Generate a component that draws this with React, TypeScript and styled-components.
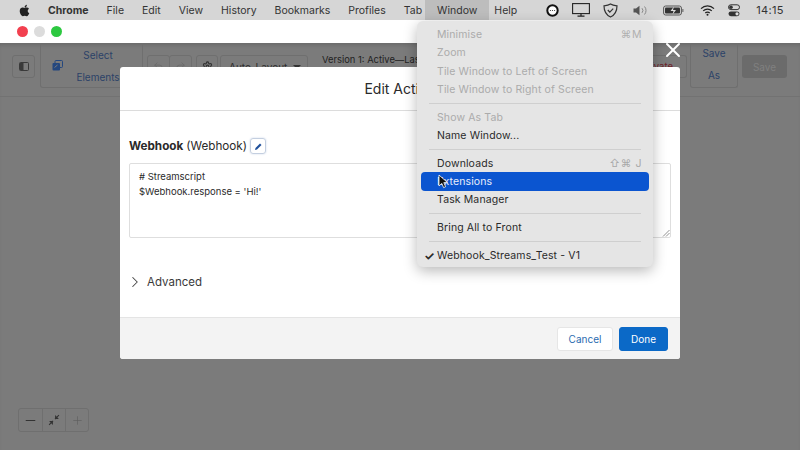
import React from 'react';
import styled, { createGlobalStyle } from 'styled-components';
import { FaApple } from 'react-icons/fa';
import { ChevronRight, Minus, Plus, Redo2, Settings, Undo2, X } from 'lucide-react';

const GlobalStyle = createGlobalStyle`
  html, body {
    margin: 0;
    padding: 0;
    background: #7b7b7b;
  }
  * {
    box-sizing: border-box;
  }
`;

const Screen = styled.div`
  position: relative;
  width: 800px;
  height: 450px;
  overflow: hidden;
  display: flex;
  flex-direction: column;
  font-family: Inter, 'Liberation Sans', sans-serif;
`;

const MenuBar = styled.div`
  height: 20px;
  background: #d6d6d6;
  display: flex;
  align-items: center;
  padding-left: 18px;
  font-size: 10.5px;
  color: #333;
`;

const AppleMark = styled.span`
  display: flex;
  width: 13px;
  margin-right: 8px;
  flex: none;
`;

const MenuItem = styled.div<{ $bold?: boolean; $open?: boolean }>`
  height: 20px;
  display: flex;
  align-items: center;
  flex: none;
  padding: 0 ${p => (p.$open ? '12px' : '9px')};
  margin: ${p => (p.$open ? '0 -4px 0 -6px' : '0')};
  font-weight: ${p => (p.$bold ? 700 : 400)};
  background: ${p => (p.$open ? '#bdbdbd' : 'transparent')};
`;

const StatusArea = styled.div`
  margin-left: 20px;
  display: flex;
  align-items: center;
  height: 20px;
  flex: none;
`;

const StatusIcon = styled.svg<{ $gap: number }>`
  margin-right: ${p => p.$gap}px;
  flex: none;
`;

const Clock = styled.span`
  font-size: 11px;
  letter-spacing: 0.3px;
  color: #333;
`;

const TitleBar = styled.div`
  height: 23px;
  background: #fff;
  display: flex;
  align-items: center;
  padding-left: 17px;
  gap: 6px;
`;

const Light = styled.span<{ $color: string }>`
  width: 11px;
  height: 11px;
  border-radius: 50%;
  background: ${p => p.$color};
`;

const Workspace = styled.div`
  flex: 1;
  background: #7b7b7b;
  box-shadow: inset 0 4px 4px -2px rgba(0, 0, 0, 0.14);
`;

const Toolbar = styled.div`
  height: 54px;
  border-bottom: 1px solid #727272;
  display: flex;
  align-items: flex-start;
  padding-left: 12px;
`;

const ToolButton = styled.div<{ $width: number; $left: number }>`
  width: ${p => p.$width}px;
  height: 23px;
  margin: 12px 0 0 ${p => p.$left}px;
  border: 1px solid #6f6f6f;
  border-radius: 3px;
  display: flex;
  align-items: center;
  justify-content: center;
  color: #4c4c4c;
  flex: none;
`;

const SelectGroup = styled.div`
  width: 103px;
  height: 45px;
  margin-left: 5px;
  border: 1px solid #6f6f6f;
  border-top: 0;
  border-radius: 0 0 3px 3px;
  display: flex;
  align-items: center;
  padding: 0 9px 0 11px;
  flex: none;
`;

const StackedLabel = styled.div`
  flex: 1;
  display: flex;
  flex-direction: column;
  align-items: center;
  gap: 5px;
  padding-top: 2px;
  font-size: 10px;
  line-height: 17px;
  color: #2c4268;
`;

const AutoLayout = styled.div`
  width: 88px;
  height: 23px;
  margin: 12px 0 0 2px;
  border: 1px solid #6f6f6f;
  border-radius: 3px;
  display: flex;
  align-items: center;
  justify-content: space-between;
  padding: 0 6px 0 8px;
  font-size: 10px;
  color: #2e2e2e;
  flex: none;
`;

const Caret = styled.span`
  border-left: 4px solid transparent;
  border-right: 4px solid transparent;
  border-top: 4px solid #333;
`;

const VersionText = styled.div`
  margin: 10px 0 0 14px;
  font-size: 9.4px;
  line-height: 14px;
  color: #222;
  white-space: nowrap;
  flex: none;
`;

const SaveAs = styled.div`
  position: absolute;
  top: 43px;
  left: 690px;
  width: 48px;
  height: 45px;
  border: 1px solid #6f6f6f;
  border-top: 0;
  border-radius: 0 0 3px 3px;
  display: flex;
`;

const SaveButton = styled.div`
  position: absolute;
  top: 55px;
  left: 742px;
  width: 45px;
  height: 23px;
  border-radius: 3px;
  background: #6b6b6b;
  color: #808080;
  font-size: 10px;
  display: flex;
  align-items: center;
  justify-content: center;
`;

const ActivateBox = styled.div`
  position: absolute;
  top: 55px;
  left: 646px;
  width: 41px;
  height: 23px;
  border: 1px solid #6f6f6f;
  border-left: 0;
  border-radius: 0 3px 3px 0;
  font-size: 9.5px;
  color: #6e1f2a;
  line-height: 14px;
  padding: 4px 13px 0 0;
  display: flex;
  justify-content: flex-end;
  white-space: nowrap;
`;

const ZoomControls = styled.div`
  position: absolute;
  left: 18px;
  top: 408px;
  width: 71px;
  height: 24px;
  border: 1px solid #6f6f6f;
  border-radius: 3px;
  display: grid;
  grid-template-columns: repeat(3, 1fr);
`;

const ZoomCell = styled.div<{ $divider?: boolean; $color?: string }>`
  display: flex;
  align-items: center;
  justify-content: center;
  color: ${p => p.$color ?? '#333'};
  border-left: ${p => (p.$divider ? '1px solid #6f6f6f' : '0')};
`;

const CloseButton = styled.div`
  position: absolute;
  top: 38px;
  left: 661px;
  color: #fff;
  display: flex;
`;

const Modal = styled.div`
  position: absolute;
  left: 120px;
  top: 67px;
  width: 560px;
  height: 292px;
  background: #fff;
  border-radius: 3px;
  display: flex;
  flex-direction: column;
`;

const ModalHeader = styled.div`
  height: 44px;
  border-bottom: 1px solid #dcdcdc;
  display: flex;
  align-items: center;
  justify-content: center;
  font-size: 14px;
  color: #2a2a2a;
  padding-bottom: 1px;
`;

const ModalBody = styled.div`
  flex: 1;
  padding: 26px 9px 0;
`;

const ResourceTitle = styled.div`
  display: flex;
  align-items: center;
  font-size: 11.7px;
  color: #2a2a2a;
  height: 18px;
`;

const Strong = styled.strong`
  font-weight: 700;
  margin-right: 3px;
`;

const PencilButton = styled.span`
  width: 16px;
  height: 16px;
  margin-left: 3px;
  border: 1px solid #c4cfe0;
  border-radius: 3px;
  display: flex;
  align-items: center;
  justify-content: center;
  box-shadow: 0 0 2px #c8d4e8;
`;

const ScriptBox = styled.div`
  position: relative;
  margin-top: 8px;
  height: 75px;
  border: 1px solid #dedede;
  border-radius: 2px;
  padding: 5px 9px;
  font-size: 9.5px;
  line-height: 15px;
  color: #2b2b2b;
`;

const ResizeGrip = styled.svg`
  position: absolute;
  right: 0;
  bottom: 0;
`;

const AdvancedRow = styled.div`
  margin: 35px 0 0 -3px;
  display: flex;
  align-items: center;
  gap: 3px;
  font-size: 11.5px;
  color: #3a3a3a;
`;

const ModalFooter = styled.div`
  height: 42px;
  background: #f3f3f3;
  border-top: 1px solid #e4e4e4;
  border-radius: 0 0 3px 3px;
  display: flex;
  align-items: center;
  justify-content: flex-end;
  gap: 6px;
  padding: 0 12px;
`;

const FooterButton = styled.div<{ $primary?: boolean }>`
  width: ${p => (p.$primary ? 49 : 56)}px;
  height: 24px;
  border-radius: 3px;
  display: flex;
  align-items: center;
  justify-content: center;
  font-size: 10px;
  background: ${p => (p.$primary ? '#0b69c7' : '#fff')};
  color: ${p => (p.$primary ? '#fff' : '#2a6bb0')};
  border: 1px solid ${p => (p.$primary ? '#0b69c7' : '#e6e6e6')};
`;

const WindowMenu = styled.div`
  position: absolute;
  left: 417px;
  top: 21px;
  width: 236px;
  height: 246px;
  padding: 4.5px 4px 4px;
  background: #e5e5e5;
  border-radius: 6px;
  box-shadow: 0 4px 14px rgba(0, 0, 0, 0.28);
  font-size: 10.5px;
  letter-spacing: 0.12px;
`;

const Row = styled.div<{ $disabled?: boolean; $active?: boolean }>`
  position: relative;
  height: 18.3px;
  padding: 0 7px 0 16px;
  display: flex;
  align-items: center;
  justify-content: space-between;
  border-radius: 4px;
  color: ${p => (p.$active ? '#e9eefb' : p.$disabled ? '#ababab' : '#2a2a2a')};
  background: ${p => (p.$active ? '#0b55d0' : 'transparent')};
`;

const Shortcut = styled.span<{ $disabled?: boolean }>`
  color: ${p => (p.$disabled ? '#b0b0b0' : '#a8a8a8')};
  letter-spacing: 0.6px;
`;

const CheckMark = styled.span`
  position: absolute;
  left: 3px;
  font-size: 12px;
  font-weight: 700;
`;

const Separator = styled.div`
  height: 1px;
  margin: 4.2px 8px;
  background: #cfcfcf;
`;

const Cursor = styled.svg`
  position: absolute;
  left: 438px;
  top: 174px;
`;

const menuLabels = ['File', 'Edit', 'View', 'History', 'Bookmarks', 'Profiles', 'Tab'];

export default function App() {
  return (
    <Screen>
      <GlobalStyle />
      <MenuBar>
        <AppleMark>
          <FaApple size={13} color="#222" />
        </AppleMark>
        <MenuItem $bold>Chrome</MenuItem>
        {menuLabels.map(label => (
          <MenuItem key={label}>{label}</MenuItem>
        ))}
        <MenuItem $open>Window</MenuItem>
        <MenuItem>Help</MenuItem>
        <StatusArea>
          <StatusIcon $gap={13} width="13" height="13" viewBox="0 0 13 13">
            <circle cx="6.5" cy="6.5" r="5.2" fill="#fff" stroke="#111" strokeWidth="2" />
            <circle cx="4.4" cy="6.5" r="0.6" fill="#333" />
            <circle cx="6.5" cy="6.5" r="0.6" fill="#333" />
            <circle cx="8.6" cy="6.5" r="0.6" fill="#333" />
          </StatusIcon>
          <StatusIcon $gap={13} width="18" height="14" viewBox="0 0 18 14">
            <rect x="0.6" y="0.6" width="16.8" height="10" fill="none" stroke="#222" strokeWidth="1.1" />
            <path d="M9 10.5v2.5M5.5 13.2h7" stroke="#222" strokeWidth="1.2" />
          </StatusIcon>
          <StatusIcon $gap={15} width="15" height="15" viewBox="0 0 15 15">
            <path d="M7.5 1 C9.5 2.4 11.5 2.6 14 2.8 C14 8 12 12 7.5 14 C3 12 1 8 1 2.8 C3.5 2.6 5.5 2.4 7.5 1Z" fill="none" stroke="#333" strokeWidth="1.2" />
            <path d="M4.8 7l2 2.2 3.4-3.6" fill="none" stroke="#333" strokeWidth="1.2" />
          </StatusIcon>
          <StatusIcon $gap={15} width="15" height="11" viewBox="0 0 15 11">
            <path d="M0.5 3.5h2.5L6.5 0.8v9.4L3 7.5H0.5Z" fill="#555" />
            <path d="M9 3.2a3.5 3.5 0 0 1 0 4.6M11.5 1.5a6 6 0 0 1 0 8" fill="none" stroke="#888" strokeWidth="1" />
          </StatusIcon>
          <StatusIcon $gap={16} width="21" height="11" viewBox="0 0 21 11">
            <rect x="0.6" y="1" width="17.8" height="9" rx="2" fill="none" stroke="#555" strokeWidth="1" />
            <rect x="2" y="2.4" width="15" height="6.2" rx="1" fill="#333" />
            <path d="M11 1.5L7.5 6h3l-1 3.5L13 5h-3z" fill="#ddd" />
            <rect x="19.2" y="4" width="1.3" height="3" fill="#777" />
          </StatusIcon>
          <StatusIcon $gap={13} width="15" height="11" viewBox="0 0 15 11">
            <path d="M1 3.6a9.2 9.2 0 0 1 13 0M3.2 5.9a6 6 0 0 1 8.6 0M5.3 8a3 3 0 0 1 4.4 0" fill="none" stroke="#222" strokeWidth="1.2" />
            <circle cx="7.5" cy="9.8" r="1" fill="#222" />
          </StatusIcon>
          <StatusIcon $gap={16} width="12" height="13" viewBox="0 0 12 13">
            <rect x="0.5" y="0.8" width="11" height="4.8" rx="2.4" fill="none" stroke="#333" />
            <circle cx="3" cy="3.2" r="1.8" fill="#333" />
            <rect x="0.5" y="7.4" width="11" height="4.8" rx="2.4" fill="#333" />
            <circle cx="9" cy="9.8" r="1.6" fill="#ddd" />
          </StatusIcon>
          <Clock>14:15</Clock>
        </StatusArea>
      </MenuBar>

      <TitleBar>
        <Light $color="#f2404f" />
        <Light $color="#dcdcdc" />
        <Light $color="#2dc840" />
      </TitleBar>

      <Workspace>
        <Toolbar>
          <ToolButton $width={23} $left={0}>
            <svg width="10" height="9" viewBox="0 0 10 9">
              <rect x="0.5" y="0.5" width="9" height="8" rx="1" fill="none" stroke="#3a3a3a" />
              <rect x="1" y="1" width="3.5" height="7" fill="#3a3a3a" />
            </svg>
          </ToolButton>
          <SelectGroup>
            <svg width="11" height="11" viewBox="0 0 11 11">
              <rect x="3" y="0.5" width="7.5" height="7" rx="1" fill="none" stroke="#24477f" />
              <rect x="0.5" y="3" width="7.5" height="7.5" rx="1" fill="#24477f" />
              <path d="M2.5 7.5L5.5 5" stroke="#7b7b7b" />
            </svg>
            <StackedLabel>
              <span>Select</span>
              <span>Elements</span>
            </StackedLabel>
          </SelectGroup>
          <ToolButton $width={23} $left={4}>
            <Undo2 size={11} strokeWidth={1.5} color="#666" />
          </ToolButton>
          <ToolButton $width={23} $left={-1}>
            <Redo2 size={11} strokeWidth={1.5} color="#666" />
          </ToolButton>
          <ToolButton $width={22} $left={4}>
            <Settings size={11} strokeWidth={2.4} color="#333" />
          </ToolButton>
          <AutoLayout>
            <span>Auto-Layout</span>
            <Caret />
          </AutoLayout>
          <VersionText>Version 1: Active—Last Modified</VersionText>
        </Toolbar>
        <ActivateBox>Activate</ActivateBox>
        <SaveAs>
          <StackedLabel>
            <span>Save</span>
            <span>As</span>
          </StackedLabel>
        </SaveAs>
        <SaveButton>Save</SaveButton>
        <ZoomControls>
          <ZoomCell>
            <Minus size={15} strokeWidth={1.6} />
          </ZoomCell>
          <ZoomCell $divider>
            <svg width="12" height="12" viewBox="0 0 11 11">
              <path d="M1 10L4.6 6.4M10 1L6.4 4.6" stroke="#333" strokeWidth="1" />
              <path d="M1 6.5h3.5V10zM10 4.5H6.5V1z" fill="#333" />
            </svg>
          </ZoomCell>
          <ZoomCell $divider $color="#5f5f5f">
            <Plus size={13} strokeWidth={1.2} />
          </ZoomCell>
        </ZoomControls>
      </Workspace>

      <Modal>
        <ModalHeader>Edit Action</ModalHeader>
        <ModalBody>
          <ResourceTitle>
            <Strong>Webhook</Strong> (Webhook)
            <PencilButton>
              <svg width="9" height="9" viewBox="0 0 9 9">
                <path d="M1 8l.5-2L6 1.5 7.5 3 3 7.5z" fill="#1f4f9a" />
              </svg>
            </PencilButton>
          </ResourceTitle>
          <ScriptBox>
            # Streamscript
            <br />
            $Webhook.response = 'Hi!'
            <ResizeGrip width="8" height="8" viewBox="0 0 8 8">
              <path d="M1 7.5L7.5 1M4 7.5L7.5 4" stroke="#777" strokeWidth="0.8" />
            </ResizeGrip>
          </ScriptBox>
          <AdvancedRow>
            <ChevronRight size={18} strokeWidth={1.4} color="#444" />
            Advanced
          </AdvancedRow>
        </ModalBody>
        <ModalFooter>
          <FooterButton>Cancel</FooterButton>
          <FooterButton $primary>Done</FooterButton>
        </ModalFooter>
      </Modal>

      <CloseButton>
        <X size={24} strokeWidth={2} />
      </CloseButton>

      <WindowMenu>
        <Row $disabled>
          Minimise
          <Shortcut $disabled>⌘M</Shortcut>
        </Row>
        <Row $disabled>Zoom</Row>
        <Row $disabled>Tile Window to Left of Screen</Row>
        <Row $disabled>Tile Window to Right of Screen</Row>
        <Separator />
        <Row $disabled>Show As Tab</Row>
        <Row>Name Window...</Row>
        <Separator />
        <Row>
          Downloads
          <Shortcut>⇧⌘ J</Shortcut>
        </Row>
        <Row $active>Extensions</Row>
        <Row>Task Manager</Row>
        <Separator />
        <Row>Bring All to Front</Row>
        <Separator />
        <Row>
          <CheckMark>✓</CheckMark>
          Webhook_Streams_Test - V1
        </Row>
      </WindowMenu>

      <Cursor width="11" height="15" viewBox="0 0 11 15">
        <path d="M1 1v11l2.8-2.6L5.6 13.6l2-.9-1.8-4.1H9.5z" fill="#111" stroke="#fff" strokeWidth="0.8" />
      </Cursor>
    </Screen>
  );
}
